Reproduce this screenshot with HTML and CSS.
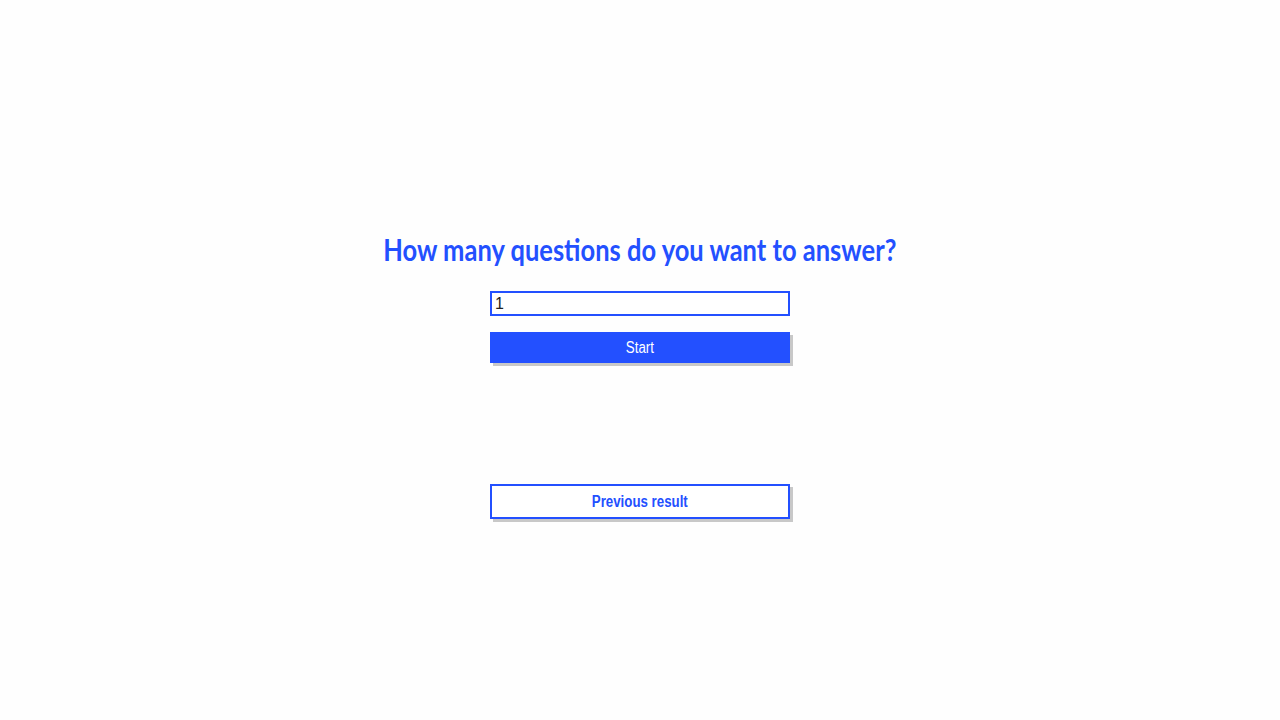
FILE: index.html
```html
<!DOCTYPE html>
<html lang="en">
<head>
<meta charset="utf-8">
<title>Quiz</title>
<link rel="stylesheet" href="styles.css">
</head>
<body>
<main class="page">
  <h1 class="title"><span class="title-text">How many questions do you want to answer?</span></h1>
  <form class="setup">
    <input class="count" type="text" value="1">
    <button class="btn btn-primary" type="button"><span class="label">Start</span></button>
  </form>
  <button class="btn btn-outline" type="button"><span class="label">Previous result</span></button>
</main>
</body>
</html>
```
FILE: styles.css
```css
html, body {
  margin: 0;
  padding: 0;
  background: #fefefe;
}
.page {
  display: flex;
  flex-direction: column;
  align-items: center;
  padding-top: 230px;
  height: 720px;
  box-sizing: border-box;
}
.title {
  margin: 0;
  height: 38px;
  font-family: Lato, "Noto Sans", sans-serif;
  font-weight: 700;
  font-size: 30px;
  line-height: 38px;
  color: #2350ff;
  white-space: nowrap;
}
.title-text {
  display: block;
  transform: scaleX(0.85);
}
.setup {
  display: flex;
  flex-direction: column;
  gap: 16px;
  margin-top: 23px;
}
.count {
  display: block;
  width: 300px;
  height: 25px;
  box-sizing: border-box;
  border: 2px solid #2350ff;
  padding: 0 3px;
  margin: 0;
  font-family: "Liberation Sans", Arial, sans-serif;
  font-size: 16px;
  color: #222;
  background: #fff;
  outline: none;
}
.btn {
  display: block;
  width: 300px;
  box-sizing: border-box;
  margin: 0;
  padding: 0;
  font-family: "Liberation Sans", Arial, sans-serif;
  font-size: 16px;
  cursor: pointer;
  box-shadow: 3px 3px 0 #c8c8c8;
}
.label {
  display: inline-block;
  transform: scaleX(0.83);
}
.btn-primary {
  height: 31px;
  border: none;
  background: #2350ff;
  color: #fff;
}
.btn-outline {
  margin-top: 121px;
  height: 35px;
  border: 2px solid #2350ff;
  background: #fff;
  color: #2350ff;
  font-weight: 700;
}
```
